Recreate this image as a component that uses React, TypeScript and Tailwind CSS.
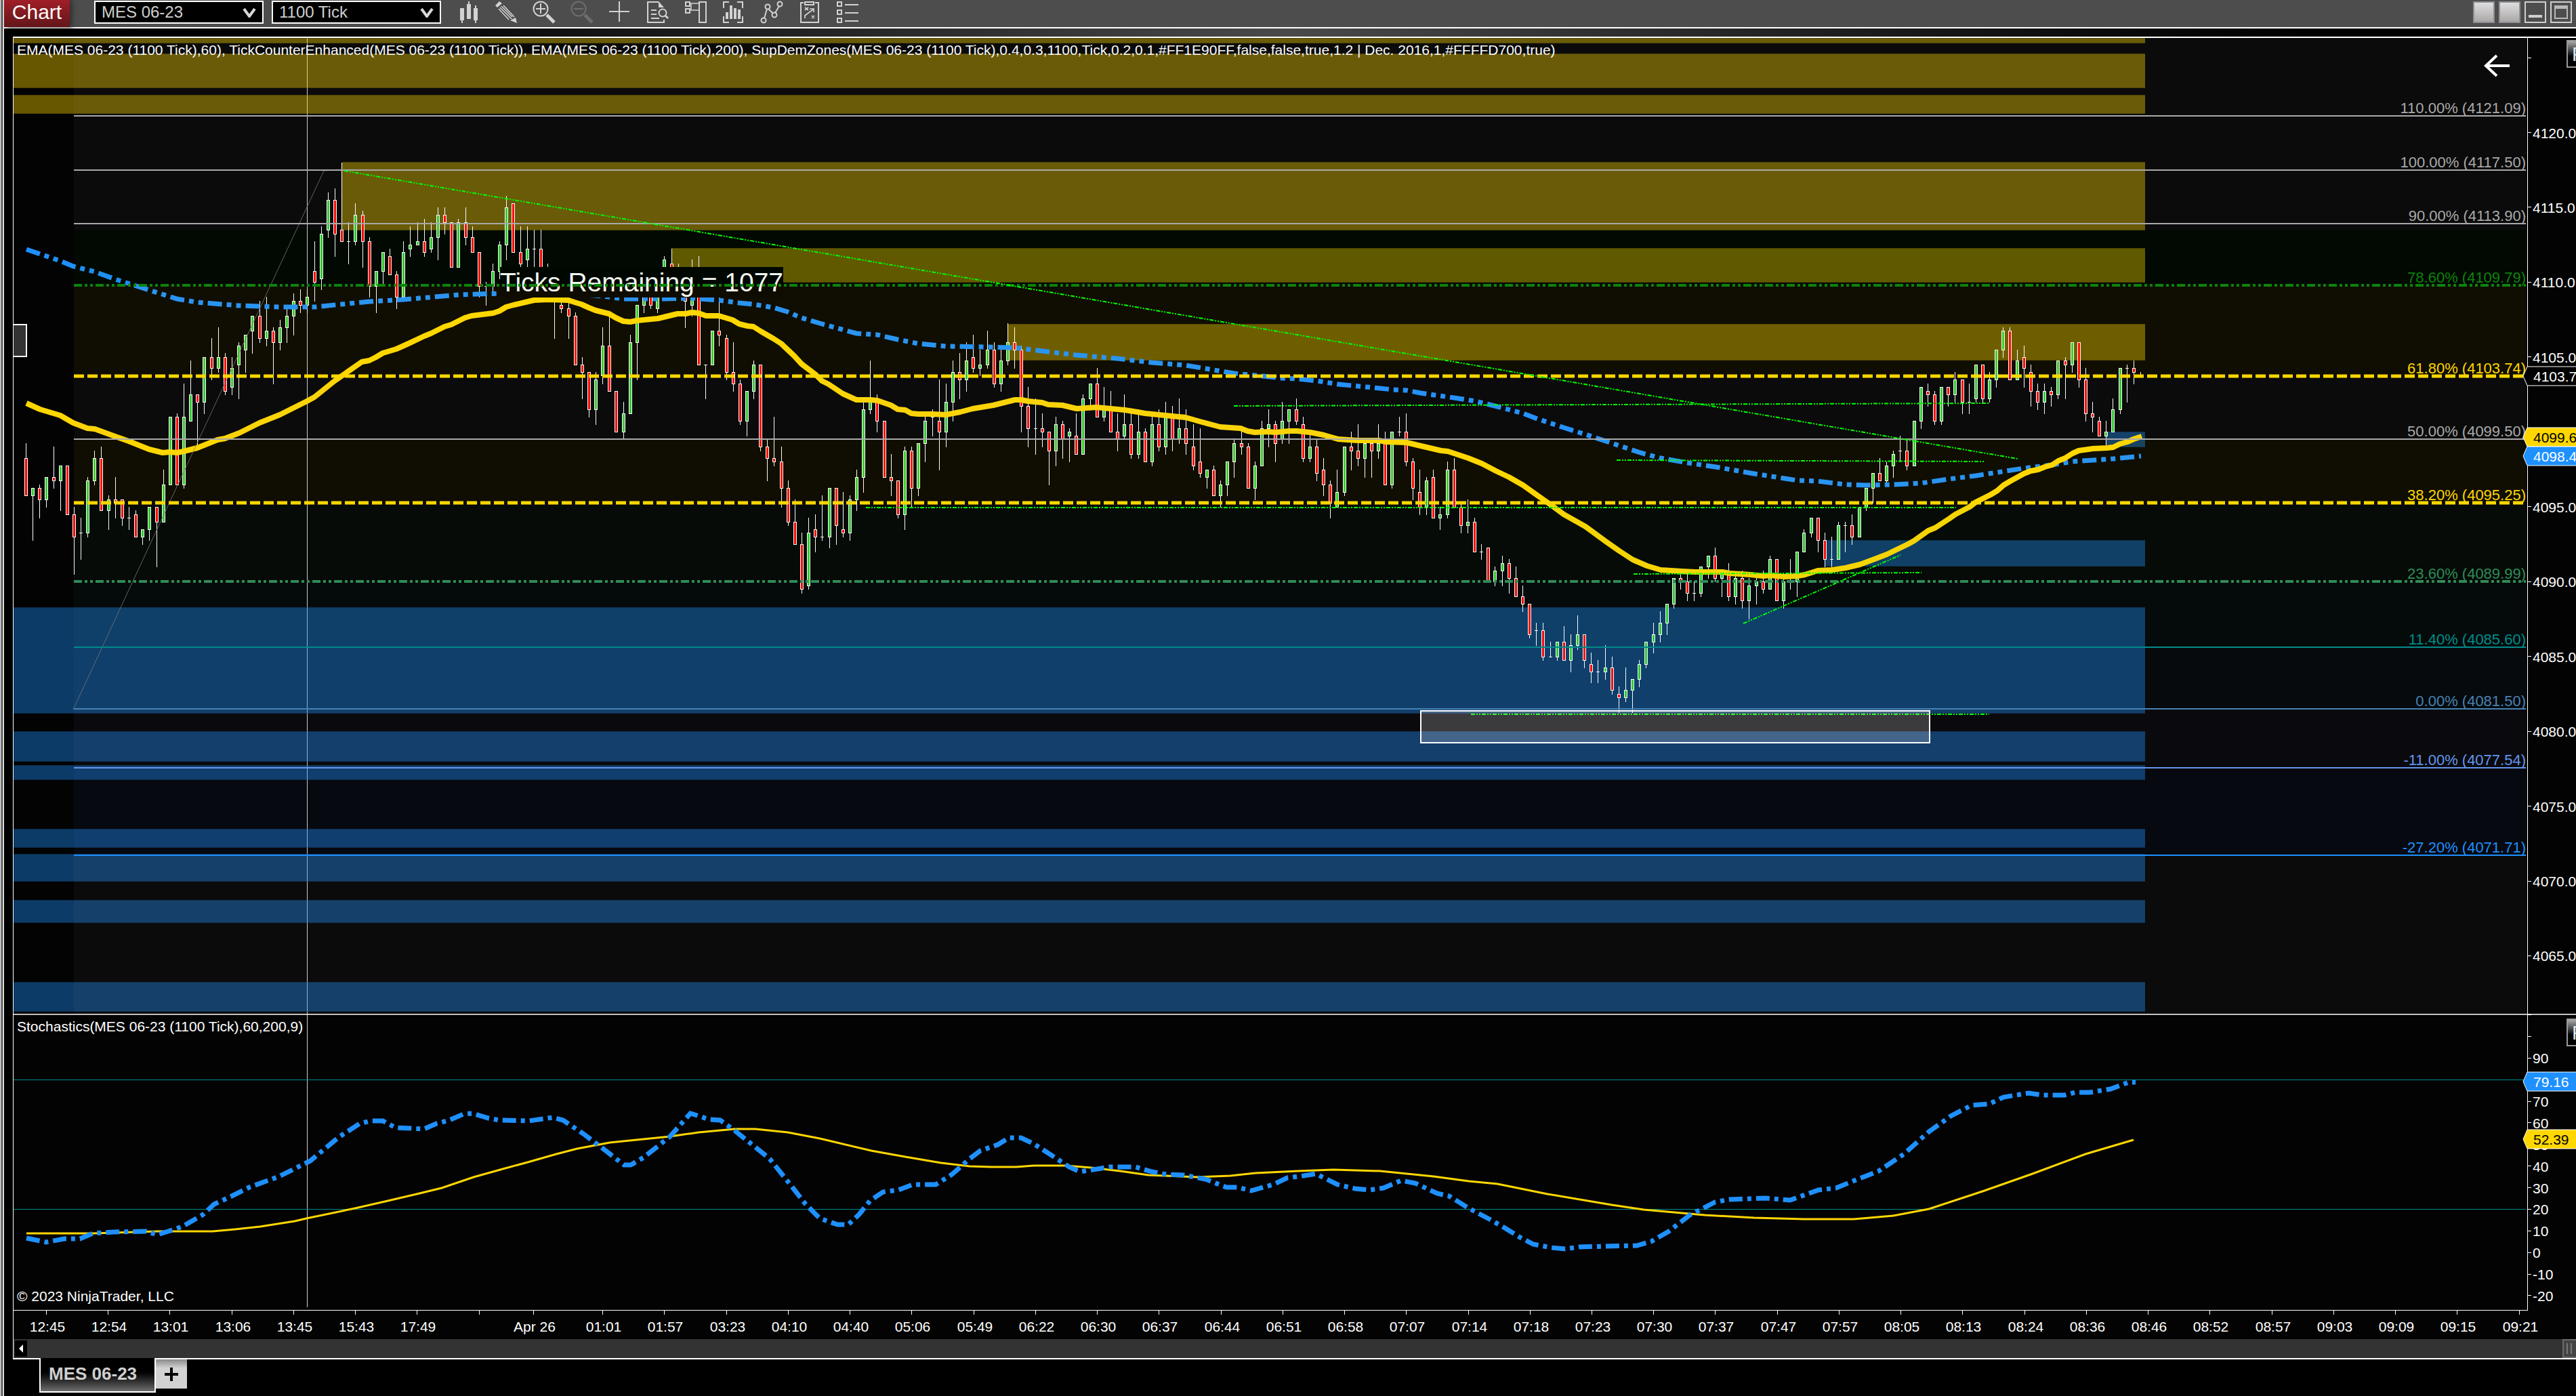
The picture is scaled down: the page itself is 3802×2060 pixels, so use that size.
import type { ReactNode } from 'react';

const WHITE = '#ffffff';
const GOLD = '#ffd700';
const DODGER = '#1e90ff';
const LIME = '#00ff00';
const SILVER = '#a9a9a9';

const AXIS_X = 3730;
const PLOT_LEFT = 20;
const PLOT_RIGHT = 3728;
const FIB_LEFT = 109;
const ZONE_RIGHT = 3166;

const priceY = (price: number) => 195.5 + (4120 - price) * 22.09;
const tickY = (ticks: number) => Math.round(195.5 + ticks * 5.5225);
const stochY = (value: number) => 1593.2 + (80 - value) * 3.187;

// open, high, low, close in quarter points below 4120
const candles = [
  [87,83,97,97],[97,95,109,95],[95,94,103,98],[98,92,100,92],[92,84,95,93],[93,89,101,89],[89,89,102,102],[102,100,118,108],
  [107,103,114,107],[107,92,108,93],[93,85,94,87],[87,84,101,101],[101,97,106,98],[98,92,103,99],[98,98,105,103],[103,100,106,103],
  [102,101,108,108],[108,106,110,106],[106,100,109,100],[100,100,116,104],[104,90,104,94],[94,76,94,76],[76,75,94,94],[94,67,95,76],
  [77,61,77,70],[70,70,84,72],[72,60,75,60],[60,55,66,63],[63,52,64,60],[60,59,70,69],[68,60,70,63],[62,56,71,57],
  [58,54,64,54],[53,49,59,49],[49,45,56,55],[55,44,57,53],[53,52,67,56],[56,50,58,52],[52,47,56,49],[49,43,54,45],
  [45,42,48,46],[46,42,48,44],[37,29,45,40],[39,25,42,27],[26,16,28,18],[18,15,33,27],[26,8,29,29],[29,24,35,29],
  [29,19,30,22],[22,21,36,29],[29,28,44,41],[41,37,48,37],[37,32,41,32],[33,31,38,38],[38,37,47,44],[44,29,44,32],
  [31,25,33,30],[30,24,30,29],[29,23,33,32],[31,24,32,28],[28,20,34,22],[22,20,27,24],[24,24,36,36],[36,23,36,24],
  [24,20,30,28],[28,25,32,32],[32,32,44,41],[41,40,46,41],[41,35,43,37],[37,29,39,30],[30,17,34,20],[19,19,32,32],
  [32,25,36,35],[34,25,38,31],[31,26,38,31],[31,26,38,37],[37,35,41,40],[40,38,55,41],[46,42,48,47],[47,45,55,49],
  [49,48,62,62],[62,60,71,64],[64,64,76,74],[74,64,78,66],[65,52,67,57],[57,49,69,69],[69,69,80,80],[80,72,82,75],
  [75,54,75,56],[56,46,66,46],[46,42,48,44],[44,42,47,46],[47,40,48,42],[42,33,43,34],[35,31,40,38],[38,35,42,40],
  [41,38,52,45],[46,34,49,41],[41,33,62,62],[62,62,71,62],[62,53,62,53],[53,44,57,54],[55,54,66,64],[64,56,69,67],
  [67,66,78,77],[77,69,81,69],[69,61,71,62],[62,62,85,84],[84,82,93,87],[87,76,89,88],[88,84,100,95],[95,93,105,104],
  [104,98,110,110],[110,107,123,122],[121,103,122,107],[106,102,112,108],[108,97,109,108],[108,95,111,95],[95,95,110,105],[106,96,108,107],
  [107,97,109,98],[98,90,101,92],[92,72,96,74],[74,61,75,72],[72,70,80,77],[77,77,92,92],[92,86,97,93],[93,93,103,102],
  [102,84,106,85],[85,84,100,95],[95,83,97,83],[83,75,88,77],[76,74,81,76],[77,66,90,80],[80,67,84,72],[72,61,77,64],
  [64,59,71,66],[66,56,69,61],[60,54,64,63],[63,58,65,62],[62,53,63,58],[58,56,68,67],[67,58,69,61],[61,51,62,56],
  [56,52,63,58],[58,57,80,73],[73,68,84,79],[79,71,86,79],[79,75,84,80],[80,80,94,85],[85,76,89,78],[78,77,87,82],
  [81,79,88,80],[81,75,86,86],[86,70,86,71],[71,67,73,67],[67,63,76,76],[76,68,77,74],[74,69,80,80],[80,75,85,82],
  [81,70,82,78],[78,75,87,86],[86,74,87,80],[80,79,88,88],[88,76,89,78],[78,74,85,84],[84,72,86,76],[76,73,85,82],
  [82,71,83,79],[79,74,86,83],[84,78,90,89],[88,79,92,91],[92,90,95,90],[90,89,97,97],[97,93,100,94],[94,88,97,88],
  [88,82,92,83],[83,79,86,84],[84,83,95,95],[95,88,98,89],[89,77,89,79],[79,74,84,78],[78,77,88,83],[82,72,83,77],
  [77,74,83,74],[74,71,78,77],[78,76,88,87],[87,80,88,84],[84,82,93,91],[90,87,97,94],[94,93,103,99],[100,90,100,96],
  [96,84,97,84],[84,80,90,85],[85,78,89,87],[87,82,92,83],[83,82,92,85],[85,78,87,83],[83,80,94,94],[94,80,95,80],
  [80,76,81,80],[80,75,89,88],[88,87,98,95],[96,90,102,100],[100,92,102,93],[92,90,103,103],[103,100,106,102],[102,88,103,90],
  [90,87,100,100],[100,99,107,105],[105,98,107,104],[104,103,112,112],[112,110,114,112],[111,111,120,120],[120,116,121,117],[117,113,121,115],
  [115,114,123,119],[119,116,124,124],[124,121,128,126],[126,126,135,134],[133,131,137,133],[133,131,141,140],[140,136,140,140],[140,136,141,136],
  [136,132,141,141],[141,134,144,137],[137,129,138,134],[134,134,143,141],[142,139,147,144],[144,141,147,144],[144,137,146,143],[143,140,150,149],
  [150,148,155,151],[151,143,152,149],[149,146,155,146],[146,141,148,142],[142,136,143,136],[136,131,139,134],[134,128,136,131],[131,126,134,126],
  [126,119,127,119],[119,118,122,120],[120,118,125,123],[123,120,125,123],[123,116,124,116],[116,113,119,113],[113,111,120,119],[119,117,124,118],
  [118,115,125,124],[124,118,126,119],[119,117,127,125],[125,119,130,121],[121,118,126,120],[120,117,123,122],[122,113,122,114],[114,114,125,125],
  [125,119,127,120],[119,114,122,118],[120,112,124,112],[112,106,112,107],[107,103,108,103],[103,103,112,109],[109,107,116,114],[114,108,116,114],
  [114,104,114,105],[105,104,112,105],[105,102,110,108],[108,100,108,100],[100,95,101,95],[95,91,99,91],[91,87,93,93],[93,88,94,89],
  [89,85,92,86],[85,81,88,85],[85,82,90,89],[89,77,89,77],[77,68,79,68],[69,67,73,70],[70,69,78,77],[77,68,78,68],
  [68,68,73,70],[70,64,72,66],[66,66,75,72],[72,67,75,72],[71,62,72,62],[62,62,72,71],[71,64,72,66],[66,58,68,58],
  [58,52,60,53],[53,52,66,66],[66,58,66,61],[60,57,68,63],[64,62,73,69],[69,67,74,72],[72,67,75,69],[69,68,73,70],
  [70,61,71,61],[61,60,71,62],[62,56,64,56],[56,56,68,66],[66,63,77,75],[75,72,80,76],[77,76,81,81],[81,77,84,80],
  [80,71,80,74],[74,63,75,63],[63,62,72,63],[63,61,67,64],[65,64,65,65],
];

const ema60 =
  '39,595 59,604 89,613 108,624 129,632 140,633 170,644 190,651 220,663 240,668 251,667 261,668 271,666 291,661 321,649 332,647 353,639 383,624 413,612 453,592 464,586 474,578 494,562 504,555 534,534 545,532 555,527 565,521 585,515 605,506 626,496 636,492 656,482 666,479 686,469 696,466 728,462 737,459 747,453 758,450 788,443 809,442 839,443 848,446 858,449 869,454 879,458 899,463 909,469 920,474 930,475 940,473 971,470 1000,463 1012,463 1021,461 1031,462 1042,466 1061,466 1081,472 1091,478 1103,481 1112,482 1123,489 1142,500 1153,507 1172,525 1183,537 1204,553 1213,562 1223,567 1244,581 1264,590 1285,590 1295,591 1315,598 1325,604 1336,605 1345,610 1355,611 1375,611 1396,612 1417,608 1436,603 1466,598 1498,590 1508,590 1517,592 1538,594 1547,597 1568,598 1589,603 1618,601 1660,605 1679,608 1690,610 1720,613 1750,616 1771,622 1801,630 1831,632 1841,636 1852,638 1872,637 1882,638 1903,636 1914,636 1934,638 1954,642 1975,648 2004,650 2035,650 2046,652 2076,653 2097,658 2127,665 2137,666 2167,676 2187,684 2208,695 2227,704 2248,716 2269,731 2289,745 2308,759 2340,777 2370,799 2390,813 2410,826 2431,835 2451,841 2482,843 2502,844 2542,844 2553,846 2583,848 2602,850 2613,849 2634,851 2653,850 2664,848 2683,842 2704,841 2724,838 2745,833 2764,826 2785,818 2816,803 2825,798 2846,783 2856,779 2876,766 2886,759 2907,748 2916,741 2938,730 2948,724 2957,716 2967,710 2978,704 2987,699 2997,695 3008,693 3018,689 3029,686 3038,680 3048,676 3059,669 3068,665 3089,662 3110,661 3119,660 3129,655 3140,652 3149,648 3161,644';

const ema200 =
  '39,368 89,385 108,393 140,401 170,412 220,428 261,441 291,446 353,451 413,453 464,453 504,449 545,445 596,442 677,435 737,433 788,430 829,432 890,437 920,441 981,441 1021,440 1061,443 1091,447 1112,449 1142,454 1162,460 1183,469 1213,478 1264,492 1295,494 1325,501 1355,507 1396,511 1457,512 1498,513 1538,518 1589,524 1649,529 1700,535 1750,539 1822,551 1864,555 1892,558 1914,559 1944,562 1975,567 2016,571 2056,575 2076,576 2097,580 2146,587 2178,592 2218,602 2248,610 2269,618 2308,631 2340,641 2370,651 2400,661 2421,668 2451,676 2491,683 2532,689 2583,698 2634,706 2653,709 2683,710 2724,715 2755,716 2795,715 2835,713 2876,707 2916,702 2948,697 2987,691 3029,686 3059,681 3089,679 3119,677 3160,673';

const stochD =
  '39,1820 137,1820 232,1817 314,1817 347,1814 384,1810 435,1802 452,1798 524,1783 568,1773 615,1762 652,1753 699,1737 742,1725 779,1715 821,1703 852,1695 900,1686 989,1677 1031,1671 1084,1666 1115,1666 1163,1671 1210,1680 1286,1698 1336,1707 1389,1716 1431,1721 1463,1722 1500,1722 1526,1720 1573,1720 1610,1723 1653,1728 1695,1734 1768,1737 1816,1735 1853,1731 1916,1728 1968,1726 2037,1728 2116,1736 2168,1743 2210,1747 2284,1762 2379,1778 2426,1785 2516,1793 2589,1797 2663,1799 2736,1799 2794,1794 2847,1784 2926,1758 3000,1732 3078,1703 3149,1682';

const stochK =
  '39,1827 68,1833 95,1828 118,1828 137,1820 168,1818 216,1817 232,1822 258,1814 271,1809 300,1792 316,1777 342,1765 368,1752 412,1736 458,1713 500,1678 531,1658 547,1654 565,1654 584,1664 626,1666 644,1658 663,1653 684,1644 697,1643 721,1650 737,1653 781,1654 816,1649 831,1653 861,1673 894,1698 921,1719 931,1719 950,1708 989,1677 1019,1643 1029,1646 1047,1652 1063,1653 1084,1668 1115,1693 1136,1710 1168,1750 1189,1777 1210,1798 1236,1807 1252,1807 1268,1792 1284,1772 1303,1759 1326,1756 1347,1748 1381,1748 1405,1733 1431,1710 1447,1698 1473,1689 1489,1679 1507,1679 1526,1688 1557,1708 1578,1722 1594,1729 1620,1725 1637,1722 1676,1722 1700,1729 1721,1733 1747,1734 1779,1740 1810,1752 1826,1752 1847,1757 1879,1748 1900,1738 1924,1735 1942,1732 1974,1748 2000,1754 2021,1756 2042,1753 2068,1742 2089,1746 2121,1761 2139,1765 2168,1783 2200,1800 2221,1812 2242,1825 2263,1836 2289,1841 2310,1843 2331,1840 2416,1838 2437,1832 2463,1817 2494,1793 2531,1774 2552,1770 2605,1768 2642,1771 2684,1756 2710,1753 2742,1740 2773,1728 2810,1703 2847,1670 2879,1647 2910,1631 2936,1629 2957,1619 2994,1613 3015,1616 3047,1616 3063,1612 3084,1612 3115,1607 3142,1597 3152,1597';

// x, top, bottom
const supplyZones = [
  [20, 56, 64],
  [20, 79, 130],
  [20, 140, 168],
  [505, 239, 340],
  [991, 366, 417],
  [1487, 478, 532],
];

const demandZones = [
  [20, 896, 1053],
  [20, 1079, 1124],
  [20, 1129, 1151],
  [20, 1223, 1251],
  [20, 1260, 1301],
  [20, 1328, 1362],
  [20, 1449, 1493],
  [2693, 797, 836],
  [3109, 637, 660],
];

const DASH_DOT = '12 4 4 4 4 4';

const fibs = [
  { pct: '110.00%', price: 4121.09, color: SILVER, width: 2 },
  { pct: '100.00%', price: 4117.5, color: SILVER, width: 2 },
  { pct: '90.00%', price: 4113.9, color: SILVER, width: 2 },
  { pct: '78.60%', price: 4109.79, color: '#0b8409', width: 4, dash: DASH_DOT },
  { pct: '61.80%', price: 4103.74, color: GOLD, width: 5, dash: '15 5' },
  { pct: '50.00%', price: 4099.5, color: SILVER, width: 2 },
  { pct: '38.20%', price: 4095.25, color: GOLD, width: 5, dash: '15 5' },
  { pct: '23.60%', price: 4089.99, color: '#2e8b57', width: 4, dash: DASH_DOT },
  { pct: '11.40%', price: 4085.6, color: '#008b8b', width: 2 },
  { pct: '0.00%', price: 4081.5, color: '#4682b4', width: 2 },
  { pct: '-11.00%', price: 4077.54, color: '#6495ed', width: 2 },
  { pct: '-27.20%', price: 4071.71, color: DODGER, width: 2 },
];

// top, bottom, tint
const fibBands: [number, number, string][] = [
  [56, 339, '#a9a9a9'],
  [339, 421, '#008000'],
  [421, 555, '#ffd700'],
  [555, 648, '#a9a9a9'],
  [648, 742, '#ffd700'],
  [742, 858, '#50a060'],
  [858, 955, '#30a890'],
  [955, 1046, '#5090b8'],
  [1046, 1133, '#9090d8'],
  [1133, 1262, '#4088e8'],
  [1262, 1496, '#a9a9a9'],
];

const trendLines = [
  [508, 252, 2978, 677],
  [1821, 599, 2936, 595],
  [2386, 679, 2930, 681],
  [1278, 749, 2887, 749],
  [2411, 847, 2836, 845],
  [2573, 920, 2805, 819],
  [2171, 1054, 2936, 1054],
];

const times = [
  '12:45', '12:54', '13:01', '13:06', '13:45', '15:43', '17:49', '', 'Apr 26', '01:01', '01:57', '03:23', '04:10', '04:40',
  '05:06', '05:49', '06:22', '06:30', '06:37', '06:44', '06:51', '06:58', '07:07', '07:14', '07:18', '07:23', '07:30', '07:37',
  '07:47', '07:57', '08:05', '08:13', '08:24', '08:36', '08:46', '08:52', '08:57', '09:03', '09:09', '09:15', '09:21',
];

function Candle({ index, data }: { index: number; data: number[] }) {
  const [open, high, low, close] = data;
  const x = Math.round(38 + index * 10.133);
  const top = tickY(Math.min(open, close));
  const bottom = tickY(Math.max(open, close));
  return (
    <g>
      <rect x={x} y={tickY(high)} width={1} height={tickY(low) - tickY(high) + 1} fill={WHITE} />
      <rect x={x - 2} y={top} width={5} height={bottom - top + 1} fill={WHITE} />
      {bottom > top && (
        <rect x={x - 1} y={top + 1} width={3} height={bottom - top - 1} fill={close > open ? '#ff0000' : '#32cd32'} />
      )}
    </g>
  );
}

function Zone({ zone, color }: { zone: number[]; color: string }) {
  const [x, top, bottom] = zone;
  return (
    <g>
      <rect x={x} y={top} width={ZONE_RIGHT - x} height={bottom - top} fill={color} fillOpacity={0.4} />
      <path d={`M${x} ${top + 0.5}H${ZONE_RIGHT}M${x} ${bottom - 0.5}H${ZONE_RIGHT}`} stroke="#000" strokeOpacity={0.25} />
    </g>
  );
}

function Marker({ y, fill, ink, label }: { y: number; fill: string; ink: string; label: string }) {
  return (
    <g>
      <path d={`M3810 ${y - 14}H3730L3724 ${y}L3730 ${y + 14}H3810`} fill={fill} stroke={WHITE} />
      <text x={3739} y={y + 8} fill={ink}>{label}</text>
    </g>
  );
}

function PanelBadge({ y }: { y: number }) {
  return (
    <g>
      <rect x={3789} y={y} width={40} height={39} fill="url(#badge)" stroke="#9a9a9a" strokeWidth={2} />
      <text x={3796} y={y + 30} fontSize={29} fill="#d8e4f0">F</text>
    </g>
  );
}

function PricePane() {
  return (
    <svg viewBox="20 56 3782 1440" className="block h-auto w-full" fontSize={21} fill={WHITE}>
      <defs>
        <linearGradient id="badge" x1="0" y1="0" x2="0" y2="1">
          <stop offset="0" stopColor="#b0b0b0" />
          <stop offset="0.6" stopColor="#000" />
        </linearGradient>
      </defs>
      <rect x={20} y={56} width={3782} height={1440} fill="#030303" />
      <path d="M453.5 56V1496" stroke="#d0d0d0" />
      {supplyZones.map((zone, i) => <Zone key={i} zone={zone} color={GOLD} />)}
      {demandZones.map((zone, i) => <Zone key={i} zone={zone} color={DODGER} />)}

      <g shapeRendering="crispEdges">
        {candles.map((data, i) => <Candle key={i} index={i} data={data} />)}
      </g>
      <polyline points={ema200} fill="none" stroke={DODGER} strokeWidth={7} strokeDasharray="21 7 7 7 7 7" />
      <polyline points={ema60} fill="none" stroke={GOLD} strokeWidth={8} strokeLinejoin="round" />

      <rect x={738} y={394} width={418} height={45} fill="#000" />
      <text x={738} y={430} fontSize={39}>Ticks Remaining = 1077</text>
      <text x={25} y={81}>
        EMA(MES 06-23 (1100 Tick),60), TickCounterEnhanced(MES 06-23 (1100 Tick)), EMA(MES 06-23 (1100 Tick),200), SupDemZones(MES 06-23 (1100 Tick),0.4,0.3,1100,Tick,0.2,0.1,#FF1E90FF,false,false,true,1.2 | Dec. 2016,1,#FFFFD700,true)
      </text>

      {fibBands.map(([top, bottom, tint]) => (
        <rect key={top} x={FIB_LEFT} y={top} width={PLOT_RIGHT - FIB_LEFT} height={bottom - top} fill={tint} fillOpacity={0.055} />
      ))}
      <path d="M108 1047L478 252L505 250" fill="none" stroke="#777" strokeOpacity={0.8} />
      {fibs.map(({ pct, price, color, width, dash }) => {
        const y = Math.round(priceY(price));
        return (
          <g key={pct}>
            <path d={`M${FIB_LEFT} ${y}H${PLOT_RIGHT}`} stroke={color} strokeWidth={width} strokeDasharray={dash} />
            <text x={PLOT_RIGHT} y={y - 4} fontSize={22} textAnchor="end" fill={color}>{`${pct} (${price.toFixed(2)})`}</text>
          </g>
        );
      })}
      {trendLines.map(([x1, y1, x2, y2]) => (
        <line key={y1} x1={x1} y1={y1} x2={x2} y2={y2} stroke={LIME} strokeWidth={2} strokeDasharray="6 2 2 2 2 2" />
      ))}
      <rect x={2097} y={1049} width={751} height={47} fill={WHITE} fillOpacity={0.2} stroke={WHITE} strokeWidth={2} />
      <path d="M3704 97H3670M3685 82L3669 97L3685 112" fill="none" stroke={WHITE} strokeWidth={4} />
      <rect x={19} y={479} width={20} height={47} fill="#333" stroke={WHITE} strokeWidth={2} />

      <path d={`M${AXIS_X + 0.5} 56V1496`} stroke={WHITE} />
      <path d="M3731 85.5H3736" stroke={WHITE} />
      {[4120, 4115, 4110, 4105, 4095, 4090, 4085, 4080, 4075, 4070, 4065].map((price) => (
        <g key={price}>
          <path d={`M3731 ${Math.floor(priceY(price))}.5H3736`} stroke={WHITE} />
          <text x={3738} y={Math.round(priceY(price)) + 8}>{price.toFixed(1)}</text>
        </g>
      ))}
      <Marker y={555} fill="#000" ink={WHITE} label="4103.7" />
      <Marker y={645} fill={GOLD} ink="#000" label="4099.6" />
      <Marker y={673} fill={DODGER} ink={WHITE} label="4098.4" />
      <PanelBadge y={60} />
    </svg>
  );
}

function StochasticsPane() {
  return (
    <svg viewBox="20 1496 3782 480" className="block h-auto w-full" fontSize={21} fill={WHITE}>
      <rect x={20} y={1496} width={3782} height={480} fill="#030303" />
      <path d="M20 1496.5H3802" stroke={WHITE} strokeWidth={2} />
      <path d="M453.5 1497V1929" stroke="#d0d0d0" />
      <path d={`M${PLOT_LEFT} 1593.5H${PLOT_RIGHT}M${PLOT_LEFT} 1784.5H${PLOT_RIGHT}`} stroke="#008b8b" />
      <polyline points={stochD} fill="none" stroke={GOLD} strokeWidth={3} />
      <polyline points={stochK} fill="none" stroke={DODGER} strokeWidth={7} strokeDasharray="20 7 6 7" />
      <text x={25} y={1522}>Stochastics(MES 06-23 (1100 Tick),60,200,9)</text>
      <text x={25} y={1920}>© 2023 NinjaTrader, LLC</text>

      <path d={`M${AXIS_X + 0.5} 1497V1934M${PLOT_LEFT} 1933.5H3731`} fill="none" stroke={WHITE} />
      {[110, 100, 90, 80, 70, 60, 50, 40, 30, 20, 10, 0, -10, -20].map((value) => (
        <g key={value}>
          <path d={`M3731 ${Math.floor(stochY(value))}.5H3736`} stroke={WHITE} />
          {value < 100 && value !== 80 && <text x={3738} y={Math.round(stochY(value)) + 8}>{value}</text>}
        </g>
      ))}
      <Marker y={1596} fill={DODGER} ink={WHITE} label="79.16" />
      <Marker y={1681} fill={GOLD} ink="#000" label="52.39" />
      <PanelBadge y={1504} />

      {times.map((time, i) => {
        const x = time === 'Apr 26' ? 787 : Math.round(68 + i * 91.24);
        return (
          <g key={i}>
            <path d={`M${x + 0.5} 1934V1940`} stroke={WHITE} />
            <text x={x + 2} y={1965} textAnchor="middle">{time}</text>
          </g>
        );
      })}
    </svg>
  );
}

function Dropdown({ label, value }: { label: string; value: string }) {
  return (
    <div className="relative w-[250px]">
      <select
        aria-label={label}
        defaultValue={value}
        className="block h-[34px] w-full appearance-none border-2 border-white bg-black px-[9px] text-[24px] leading-[30px] text-[#cfcfcf]"
      >
        <option>{value}</option>
      </select>
      <svg viewBox="0 0 20 14" className="pointer-events-none absolute top-[11px] right-[11px] h-[14px] w-5">
        <path d="M2 1L10 12L18 1" fill="none" stroke="#d8d8d8" strokeWidth={4} />
      </svg>
    </div>
  );
}

const tools: { label: string; dim?: boolean; icon: ReactNode }[] = [
  {
    label: 'Bar type',
    icon: (
      <path
        d="M15 12h6v18h-6zM25 6h6v22h-6zM35 12h6v18h-6zM17 30h2v4h-2zM27 2h2v4h-2zM37 8h2v4h-2zM37 30h2v4h-2z"
        fill="currentColor"
        stroke="none"
      />
    ),
  },
  {
    label: 'Drawing tools',
    icon: (
      <>
        <path d="M11 8L17 2L21 5L14 11ZM43 34L33 30L41 26Z" fill="currentColor" stroke="none" />
        <path d="M16 13L31 29M18 11L35 28M20 9L36 25M23 8L39 25" strokeWidth={1.6} />
      </>
    ),
  },
  {
    label: 'Zoom in',
    icon: (
      <>
        <circle cx={22} cy={13} r={10.5} />
        <path d="M15 13H29M22 5V20" />
        <path d="M31 22L42 33" strokeWidth={5} />
      </>
    ),
  },
  {
    label: 'Zoom out',
    dim: true,
    icon: (
      <>
        <circle cx={22} cy={13} r={10.5} />
        <path d="M15 13H29" />
        <path d="M31 22L42 33" strokeWidth={5} />
      </>
    ),
  },
  { label: 'Crosshair', icon: <path d="M11 17H41M26 2V32" /> },
  {
    label: 'Data box',
    icon: (
      <>
        <path d="M36 29V33H12V3H28" />
        <path d="M28 2L36 11H28Z" fill="currentColor" stroke="none" />
        <path d="M17 15H25M17 21H25M17 27H29" />
        <circle cx={34} cy={19} r={5.5} />
        <path d="M38 23L42 27" strokeWidth={3} />
      </>
    ),
  },
  {
    label: 'Chart trader',
    icon: (
      <>
        <path d="M12 3H18V9H12ZM12 13H18V19H12ZM32 3H42V33H32Z" />
        <path d="M18 5H32M18 15H32M20 5V15" strokeWidth={1.5} />
      </>
    ),
  },
  {
    label: 'Indicators',
    icon: (
      <>
        <path d="M20 3H12V12M32 3H40V12M20 33H12V24M32 33H40V24" />
        <path d="M15 18h4v10h-4zM21 8h4v20h-4zM27 12h4v16h-4zM33 14h4v14h-4z" fill="currentColor" stroke="none" />
      </>
    ),
  },
  {
    label: 'Line tools',
    icon: (
      <>
        <path d="M16 27L20 13M22 13L29 20M32 19L38 9" />
        <circle cx={15} cy={30} r={3.5} />
        <circle cx={21} cy={10} r={3.5} />
        <circle cx={31} cy={22} r={3.5} />
        <circle cx={39} cy={6} r={3.5} />
      </>
    ),
  },
  {
    label: 'Strategies',
    icon: (
      <>
        <path d="M18 4H14V33H40V4H35M20 3H33V7H20Z" />
        <path d="M20 27V23L32 14M27 13H33V18M20 11L25 15M25 11L20 15M30 23L34 27M34 23L30 27" strokeWidth={1.7} />
      </>
    ),
  },
  {
    label: 'Properties',
    icon: <path d="M12 3H18V9H12ZM12 15H18V21H12ZM12 27H18V33H12ZM23 7H43M23 19H43M23 31H43" />,
  },
];

function Toolbar() {
  return (
    <header className="flex h-[42px] items-start border-b-2 border-white bg-[#4d4d4d]">
      <button className="h-10 w-[97px] bg-linear-to-b from-[#a01e27] to-[#63161a] pb-1 text-[30px] leading-9 text-white shadow-[4px_0_6px_#333]">
        Chart
      </button>
      <div className="ml-9 flex gap-3 pt-px">
        <Dropdown label="Instrument" value="MES 06-23" />
        <Dropdown label="Interval" value="1100 Tick" />
      </div>
      <nav className="ml-[13px] flex">
        {tools.map(({ label, dim, icon }) => (
          <button key={label} aria-label={label} className={dim ? 'text-[#6e6e6e]' : 'text-[#d2d2d2]'}>
            <svg viewBox="0 0 56 40" className="block h-10 w-14" fill="none" stroke="currentColor" strokeWidth={2}>
              {icon}
            </svg>
          </button>
        ))}
      </nav>
      <div className="mt-0.5 mr-[6px] ml-auto flex gap-[6px]">
        <button aria-label="Link instrument" className="size-8 border-2 border-[#8f8f96] bg-linear-to-b from-[#dedede] to-[#aca8a8]" />
        <button aria-label="Link interval" className="size-8 border-2 border-[#8f8f96] bg-linear-to-b from-[#dedede] to-[#aca8a8]" />
        <button aria-label="Minimize" className="flex size-8 items-end justify-center border-2 border-[#cfcfcf] pb-[6px]">
          <span className="h-1 w-5 bg-[#cfcfcf]" />
        </button>
        <button aria-label="Maximize" className="flex size-8 items-center justify-center border-2 border-[#cfcfcf]">
          <span className="h-5 w-5 border-2 border-t-[5px] border-[#b8b8b8]" />
        </button>
      </div>
    </header>
  );
}

export default function App() {
  return (
    <div className="flex min-h-screen overflow-hidden bg-black font-['Liberation_Sans',Arial,sans-serif] text-white">
      <div className="w-[6px] shrink-0 border-r-2 border-l-2 border-r-[#e0e0e0] border-l-[#bdbdbd] bg-[#4a4a4a]" />
      <div className="flex min-w-0 flex-1 flex-col">
        <Toolbar />
        <div className="h-3 bg-linear-to-r from-black via-[#4a4a4a] to-black" />
        <main className="ml-[13px] border-t-2 border-b-2 border-l border-white">
          <PricePane />
          <StochasticsPane />
          <div className="flex h-7 items-center justify-between bg-[#333]">
            <button aria-label="Scroll left" className="ml-0.5 flex h-6 w-[18px] items-center justify-center bg-black">
              <svg viewBox="0 0 6 12" className="h-3 w-[6px]">
                <path d="M6 0V12L0 6Z" fill="#fff" />
              </svg>
            </button>
            <div className="flex h-7 w-5 items-center gap-1 border-2 border-r-0 border-[#6b6b6b] bg-[#444] pl-1">
              <span className="h-4 w-0.5 bg-[#777]" />
              <span className="h-4 w-0.5 bg-[#777]" />
            </div>
          </div>
        </main>
        <footer className="-mt-0.5 ml-[52px] flex h-[54px] items-start">
          <button className="relative h-[51px] w-[172px] border-2 border-t-0 border-white bg-linear-to-b from-black from-30% to-[#707070] pb-1 pl-3 text-left text-[26px] leading-10 font-bold text-[#cfcfcf]">
            MES 06-23
          </button>
          <button aria-label="Add tab" className="mt-0.5 flex h-[43px] w-[46px] items-center justify-center bg-linear-to-b from-[#8a8a8a] to-[#d2d2d2] to-30%">
            <svg viewBox="0 0 20 20" className="size-5">
              <path d="M10 0V20M0 10H20" stroke="#000" strokeWidth={4} />
            </svg>
          </button>
        </footer>
      </div>
    </div>
  );
}
